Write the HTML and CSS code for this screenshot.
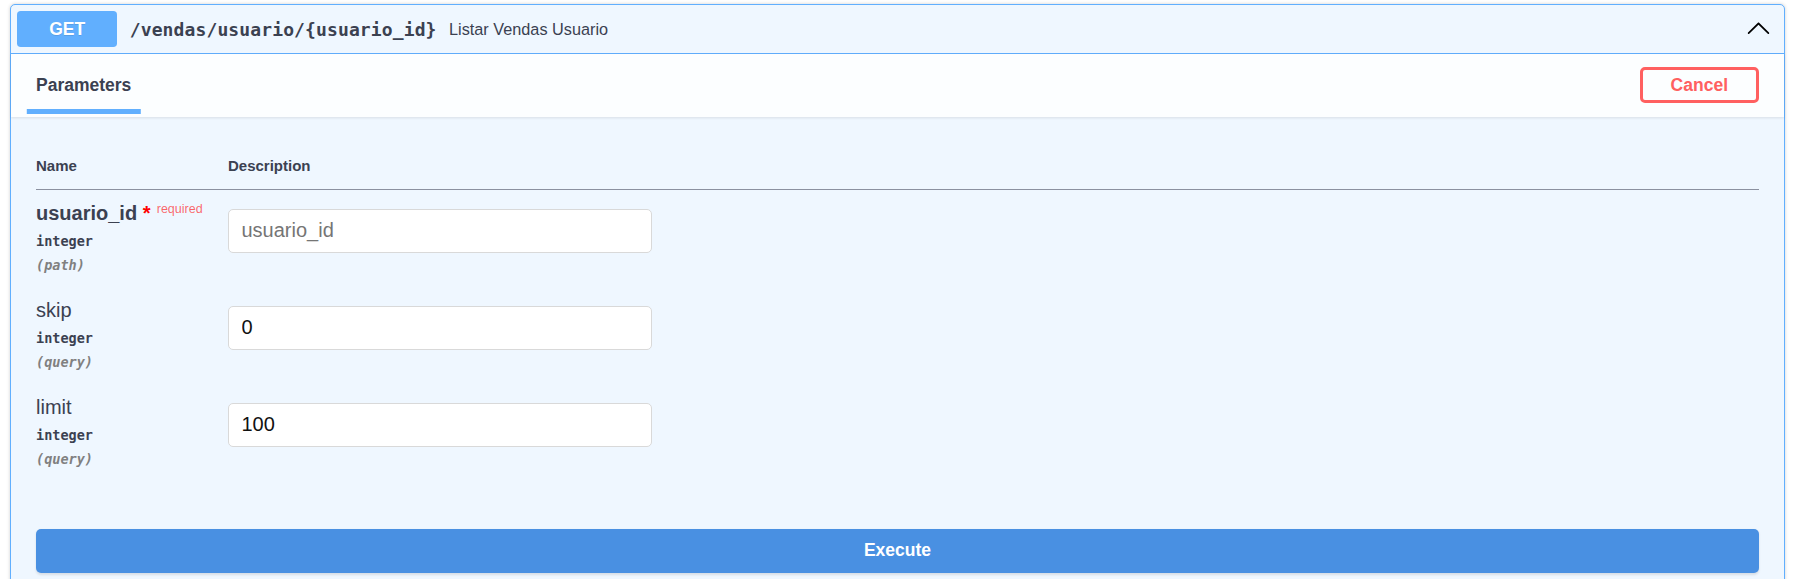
FILE: index.html
```html
<!DOCTYPE html>
<html lang="pt">
<head>
<meta charset="utf-8">
<title>GET /vendas/usuario/{usuario_id}</title>
<link rel="stylesheet" href="styles.css">
</head>
<body>
<div class="page">
  <div class="opblock">
    <div class="summary">
      <span class="method">GET</span>
      <span class="path">/vendas/usuario/{usuario_id}</span>
      <span class="summary-desc">Listar Vendas Usuario</span>
      <button class="arrow" aria-label="Collapse operation">
        <svg width="25" height="25" viewBox="0 0 20 20"><path d="M17.418 14.908c.272.268.709.268.979 0s.271-.701 0-.969l-7.908-7.83c-.27-.268-.707-.268-.979 0l-7.908 7.83c-.27.268-.27.701 0 .969.271.268.709.268.979 0L10 7.767l7.418 7.141z"/></svg>
      </button>
    </div>
    <div class="section-header">
      <div class="tab-item"><h4 class="tab-title"><span class="tab-label">Parameters</span></h4></div>
      <button class="btn-cancel">Cancel</button>
    </div>
    <div class="table-container">
      <table class="params">
        <thead>
          <tr><th class="col-name">Name</th><th class="col-desc">Description</th></tr>
        </thead>
        <tbody>
          <tr>
            <td class="col-name">
              <div class="param-name required">usuario_id<span class="star">&nbsp;*</span></div>
              <div class="param-type">integer</div>
              <div class="param-in">(path)</div>
            </td>
            <td class="col-desc"><input class="param-input" type="text" placeholder="usuario_id"></td>
          </tr>
          <tr>
            <td class="col-name">
              <div class="param-name">skip</div>
              <div class="param-type">integer</div>
              <div class="param-in">(query)</div>
            </td>
            <td class="col-desc"><input class="param-input" type="text" value="0"></td>
          </tr>
          <tr>
            <td class="col-name">
              <div class="param-name">limit</div>
              <div class="param-type">integer</div>
              <div class="param-in">(query)</div>
            </td>
            <td class="col-desc"><input class="param-input" type="text" value="100"></td>
          </tr>
        </tbody>
      </table>
    </div>
    <div class="execute-wrapper">
      <button class="btn-execute">Execute</button>
    </div>
  </div>
</div>
</body>
</html>
```

FILE: styles.css
```css
* { box-sizing: border-box; }

html, body {
  margin: 0;
  padding: 0;
  background: #fff;
}

body {
  font-family: "Liberation Sans", Arial, sans-serif;
  color: #3b4151;
}

.page {
  padding: 4px 0 0 10px;
}

.opblock {
  width: 1775px;
  border: 1px solid #61affe;
  border-radius: 5px;
  background: #eff7ff;
  box-shadow: 0 0 3.75px rgba(0, 0, 0, .19);
}

/* summary */
.summary {
  display: flex;
  align-items: center;
  padding: 6.25px;
  border-bottom: 1px solid #61affe;
}

.method {
  width: 100px;
  padding: 7.75px 0;
  line-height: 20px;
  background: #61affe;
  border-radius: 3.75px;
  color: #fff;
  font-size: 17.5px;
  font-weight: 700;
  text-align: center;
  text-shadow: 0 1px 0 rgba(0, 0, 0, .1);
}

.path {
  padding: 0 12.5px;
  font-family: "DejaVu Sans Mono", monospace;
  font-size: 18px;
  font-weight: 700;
  letter-spacing: .12px;
  color: #3b4151;
}

.summary-desc {
  font-size: 16.25px;
  color: #3b4151;
}

.arrow {
  margin: 0 6.75px 4px auto;
  padding: 0;
  border: 0;
  background: none;
  display: flex;
}

.arrow svg { fill: #000; }

/* section header */
.section-header {
  display: flex;
  align-items: center;
  justify-content: space-between;
  min-height: 62.5px;
  padding: 10px 25px;
  background: rgba(255, 255, 255, .8);
  box-shadow: 0 1.25px 2.5px rgba(0, 0, 0, .1);
}

.tab-title {
  margin: 0;
  font-size: 17.5px;
  font-weight: 700;
  color: #3b4151;
}

.tab-label {
  position: relative;
}

.tab-label::after {
  content: "";
  position: absolute;
  left: 50%;
  bottom: -18.75px;
  width: 120%;
  height: 5px;
  transform: translateX(-50%);
  background: #61affe;
}

.btn-cancel {
  padding: 6px 28px;
  line-height: 18px;
  border: 3px solid #ff6060;
  border-radius: 5px;
  background: transparent;
  color: #ff6060;
  font-family: "Liberation Sans", Arial, sans-serif;
  font-size: 17.5px;
  font-weight: 700;
}

/* parameters table */
.table-container {
  padding: 25px;
}

.params {
  width: 100%;
  border-collapse: collapse;
}

.params th {
  padding: 15px 0;
  font-size: 15px;
  line-height: 17.25px;
  font-weight: 700;
  text-align: left;
  color: #3b4151;
  border-bottom: 1px solid rgba(59, 65, 81, .33);
}

.params td {
  padding: 12.5px 0;
  vertical-align: top;
}

.col-name {
  width: 192px;
}

.param-name {
  font-size: 20px;
  line-height: 23px;
  color: #3b4151;
}

.param-name.required {
  font-weight: 700;
}

.star {
  color: red;
}

.param-name.required::after {
  content: "required";
  position: relative;
  top: -7.5px;
  padding: 6.25px;
  font-size: 12.5px;
  line-height: 10px;
  font-weight: 400;
  color: rgba(255, 0, 0, .6);
}

.param-type {
  padding: 6.25px 0;
  font-family: "DejaVu Sans Mono", monospace;
  font-size: 13.5px;
  line-height: 18.25px;
  font-weight: 700;
  color: #3b4151;
}

.param-in {
  font-family: "DejaVu Sans Mono", monospace;
  font-size: 13.5px;
  line-height: 18.25px;
  font-weight: 700;
  font-style: italic;
  color: #808080;
}

.param-input {
  display: block;
  width: 424px;
  height: 44px;
  margin: 6.25px 0;
  padding: 0 12.5px;
  border: 1px solid #d9d9d9;
  border-radius: 5px;
  background: #fff;
  font-family: "Liberation Sans", Arial, sans-serif;
  font-size: 20px;
  color: #111;
}

.param-input::placeholder {
  color: #757575;
}

/* execute */
.execute-wrapper {
  padding: 23px 25px 25px;
}

.btn-execute {
  display: block;
  width: 100%;
  height: 44px;
  border: 0;
  border-radius: 5px;
  background: #4990e2;
  color: #fff;
  font-family: "Liberation Sans", Arial, sans-serif;
  font-size: 17.5px;
  font-weight: 700;
  box-shadow: 0 1.25px 2.5px rgba(0, 0, 0, .1);
}
```
